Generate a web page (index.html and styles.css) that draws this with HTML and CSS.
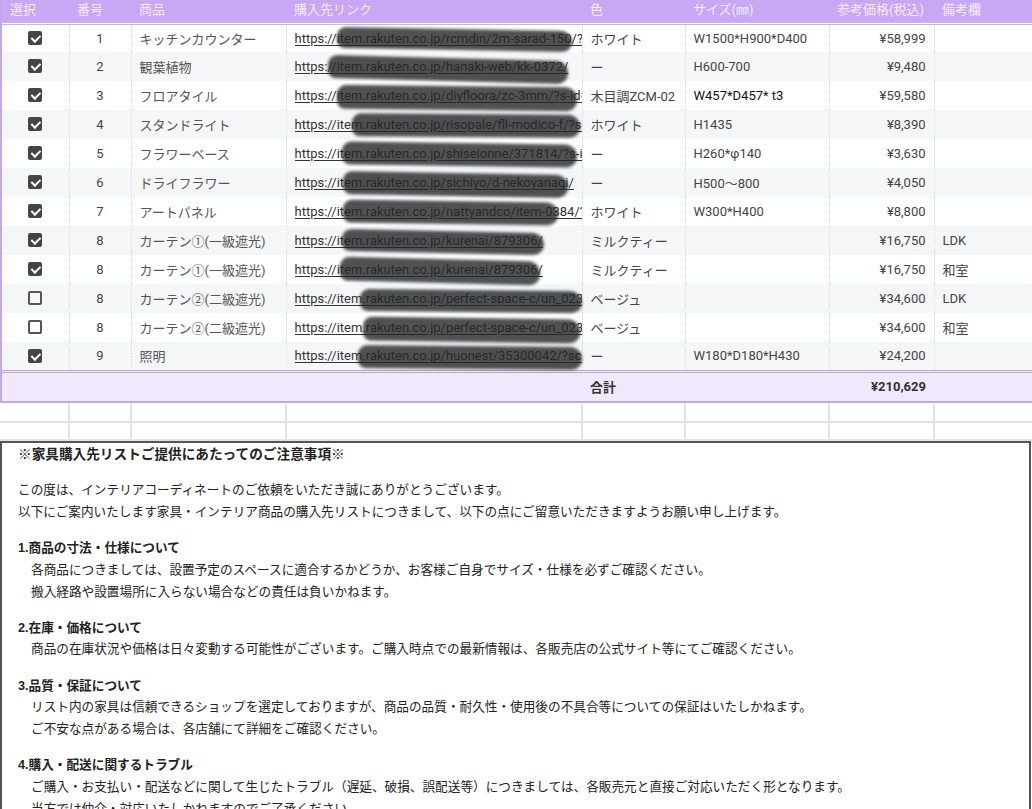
FILE: index.html
```html
<!DOCTYPE html>
<html lang="ja">
<head>
<meta charset="utf-8">
<title>家具購入先リスト</title>
<link rel="stylesheet" href="styles.css">
</head>
<body>
<div class="sheet">
  <div class="data-wrap">
    <table class="grid">
      <colgroup>
        <col class="c-sel"><col class="c-no"><col class="c-item"><col class="c-link"><col class="c-color"><col class="c-size"><col class="c-price"><col class="c-note">
      </colgroup>
      <thead>
        <tr><th>選択</th><th>番号</th><th>商品</th><th>購入先リンク</th><th>色</th><th>サイズ(㎜)</th><th>参考価格(税込)</th><th>備考欄</th></tr>
      </thead>
      <tbody>
        <tr><td class="sel"><span class="cb on"></span></td><td class="no">1</td><td class="item">キッチンカウンター</td><td class="link"><a>https://item.rakuten.co.jp/rcmdin/2m-sarad-150/?s-id=top_normal_browsehist</a></td><td>ホワイト</td><td>W1500*H900*D400</td><td class="price">¥58,999</td><td></td></tr>
        <tr class="alt"><td class="sel"><span class="cb on"></span></td><td class="no">2</td><td class="item">観葉植物</td><td class="link"><a>https://item.rakuten.co.jp/hanaki-web/kk-0372/</a></td><td>ー</td><td>H600-700</td><td class="price">¥9,480</td><td></td></tr>
        <tr><td class="sel"><span class="cb on"></span></td><td class="no">3</td><td class="item">フロアタイル</td><td class="link"><a>https://item.rakuten.co.jp/diyfloora/zc-3mm/?s-id=top_normal</a></td><td>木目調ZCM-02</td><td class="dark">W457*D457* t3</td><td class="price">¥59,580</td><td></td></tr>
        <tr class="alt"><td class="sel"><span class="cb on"></span></td><td class="no">4</td><td class="item">スタンドライト</td><td class="link"><a>https://item.rakuten.co.jp/risopale/fll-modico-f/?scid=af_pc</a></td><td>ホワイト</td><td>H1435</td><td class="price">¥8,390</td><td></td></tr>
        <tr><td class="sel"><span class="cb on"></span></td><td class="no">5</td><td class="item">フラワーベース</td><td class="link"><a>https://item.rakuten.co.jp/shiseionne/371814/?s-id=top</a></td><td>ー</td><td>H260*φ140</td><td class="price">¥3,630</td><td></td></tr>
        <tr class="alt"><td class="sel"><span class="cb on"></span></td><td class="no">6</td><td class="item">ドライフラワー</td><td class="link"><a>https://item.rakuten.co.jp/sichiyo/d-nekoyanagi/</a></td><td>ー</td><td>H500～800</td><td class="price">¥4,050</td><td></td></tr>
        <tr><td class="sel"><span class="cb on"></span></td><td class="no">7</td><td class="item">アートパネル</td><td class="link"><a>https://item.rakuten.co.jp/nattyandco/item-0384/?s-id=top</a></td><td>ホワイト</td><td>W300*H400</td><td class="price">¥8,800</td><td></td></tr>
        <tr class="alt"><td class="sel"><span class="cb on"></span></td><td class="no">8</td><td class="item">カーテン①(一級遮光)</td><td class="link"><a>https://item.rakuten.co.jp/kurenai/879306/</a></td><td>ミルクティー</td><td></td><td class="price">¥16,750</td><td>LDK</td></tr>
        <tr><td class="sel"><span class="cb on"></span></td><td class="no">8</td><td class="item">カーテン①(一級遮光)</td><td class="link"><a>https://item.rakuten.co.jp/kurenai/879306/</a></td><td>ミルクティー</td><td></td><td class="price">¥16,750</td><td>和室</td></tr>
        <tr class="alt"><td class="sel"><span class="cb"></span></td><td class="no">8</td><td class="item">カーテン②(二級遮光)</td><td class="link"><a>https://item.rakuten.co.jp/perfect-space-c/un_02333/</a></td><td>ベージュ</td><td></td><td class="price">¥34,600</td><td>LDK</td></tr>
        <tr><td class="sel"><span class="cb"></span></td><td class="no">8</td><td class="item">カーテン②(二級遮光)</td><td class="link"><a>https://item.rakuten.co.jp/perfect-space-c/un_02333/</a></td><td>ベージュ</td><td></td><td class="price">¥34,600</td><td>和室</td></tr>
        <tr class="alt"><td class="sel"><span class="cb on"></span></td><td class="no">9</td><td class="item">照明</td><td class="link"><a>https://item.rakuten.co.jp/huonest/35300042/?scid=af_pc</a></td><td>ー</td><td>W180*D180*H430</td><td class="price">¥24,200</td><td></td></tr>
      </tbody>
      <tfoot>
        <tr><td></td><td></td><td></td><td></td><td class="sum-label">合計</td><td></td><td class="price sum">¥210,629</td><td></td></tr>
      </tfoot>
    </table>
    <div class="redactions" aria-hidden="true">
      <span class="rd r1"></span><span class="rd r2"></span><span class="rd r3"></span><span class="rd r4"></span>
      <span class="rd r5"></span><span class="rd r6"></span><span class="rd r7"></span><span class="rd r8"></span>
      <span class="rd r9"></span><span class="rd r10"></span><span class="rd r11"></span><span class="rd r12"></span>
    </div>
  </div>

  <table class="blank">
    <colgroup>
      <col class="c-sel"><col class="c-no"><col class="c-item"><col class="c-link"><col class="c-color"><col class="c-size"><col class="c-price"><col class="c-note">
    </colgroup>
    <tr><td></td><td></td><td></td><td></td><td></td><td></td><td></td><td></td></tr>
    <tr><td></td><td></td><td></td><td></td><td></td><td></td><td></td><td></td></tr>
  </table>

  <section class="notes">
    <h1 class="notes-title">※家具購入先リストご提供にあたってのご注意事項※</h1>
    <div class="block">
      <p>この度は、インテリアコーディネートのご依頼をいただき誠にありがとうございます。</p>
      <p>以下にご案内いたします家具・インテリア商品の購入先リストにつきまして、以下の点にご留意いただきますようお願い申し上げます。</p>
    </div>
    <div class="block">
      <h2>1.商品の寸法・仕様について</h2>
      <p class="ind">各商品につきましては、設置予定のスペースに適合するかどうか、お客様ご自身でサイズ・仕様を必ずご確認ください。</p>
      <p class="ind">搬入経路や設置場所に入らない場合などの責任は負いかねます。</p>
    </div>
    <div class="block">
      <h2>2.在庫・価格について</h2>
      <p class="ind">商品の在庫状況や価格は日々変動する可能性がございます。ご購入時点での最新情報は、各販売店の公式サイト等にてご確認ください。</p>
    </div>
    <div class="block">
      <h2>3.品質・保証について</h2>
      <p class="ind">リスト内の家具は信頼できるショップを選定しておりますが、商品の品質・耐久性・使用後の不具合等についての保証はいたしかねます。</p>
      <p class="ind">ご不安な点がある場合は、各店舗にて詳細をご確認ください。</p>
    </div>
    <div class="block">
      <h2>4.購入・配送に関するトラブル</h2>
      <p class="ind">ご購入・お支払い・配送などに関して生じたトラブル（遅延、破損、誤配送等）につきましては、各販売元と直接ご対応いただく形となります。</p>
      <p class="ind">当方では仲介・対応いたしかねますのでご了承ください。</p>
    </div>
  </section>
</div>
</body>
</html>
```

FILE: styles.css
```css
* { box-sizing: border-box; }
html, body { margin: 0; padding: 0; background: #fff; }
body {
  font-family: Roboto, "Noto Sans CJK JP", sans-serif;
  font-size: 13px;
  color: #444;
  overflow: hidden;
  height: 809px;
}
.sheet { width: 1032px; }

.data-wrap { position: relative; border-left: 2px solid #c2a8e8; }

table { border-collapse: collapse; table-layout: fixed; width: 1032px; }
.data-wrap .grid { width: 1030px; }

.c-sel { width: 67px; }
.c-no { width: 62px; }
.c-item { width: 155px; }
.c-link { width: 296px; }
.c-color { width: 103px; }
.c-size { width: 144px; }
.c-price { width: 105px; }
.c-note { width: 98px; }
.blank .c-sel { width: 69px; }

.grid th {
  height: 23px;
  background: #c8a8f4;
  background-clip: padding-box;
  color: #f3ecfd;
  font-weight: 400;
  text-align: left;
  vertical-align: top;
  padding: 0 8px;
  border-bottom: 3px double #c5b8d6;
  white-space: nowrap;
  line-height: 20px;
}
.grid tbody td {
  height: 29px;
  padding: 0 8px;
  white-space: nowrap;
  overflow: hidden;
  border-right: 1px dotted #d6d6dc;
  vertical-align: middle;
}
.grid tbody td:last-child { border-right: none; }
.grid tbody tr.alt td { background: #f4f6f8; }

.sel { text-align: center; padding: 0 !important; }
.no { text-align: center; color: #444; }
.item { color: #555; }
.grid tbody td.link { padding-right: 0; }
.link a { display: block; overflow: hidden; color: #333; text-decoration: underline; text-underline-offset: 2px; }
.price { text-align: right; }
.dark { color: #111; }

.cb {
  display: inline-block;
  width: 14px; height: 14px;
  border: 2px solid #555;
  border-radius: 2px;
  vertical-align: middle;
  position: relative;
  top: -1px;
}
.cb.on {
  background: #454545;
  border-color: #454545;
}
.cb.on::after {
  content: "";
  position: absolute;
  left: 2.5px; top: 0px;
  width: 3.5px; height: 7px;
  border-right: 2px solid #fff;
  border-bottom: 2px solid #fff;
  transform: rotate(45deg);
}

.grid tfoot td {
  height: 31px;
  background: #f1e8fd;
  border-top: 3px double #b9a9cc;
  border-bottom: 2px solid #bfaed3;
  padding: 0 8px;
  font-weight: 700;
  color: #333;
}
.grid tfoot td.price { text-align: right; }

.blank td {
  height: 19px;
  border: 2px solid #e3e3e3;
  border-top: none;
}
.blank tr:last-child td { height: 18px; }
.blank td:first-child { border-left: none; }
.blank td:last-child { border-right: none; }

.redactions { position: absolute; inset: 0; pointer-events: none; }
.rd {
  position: absolute;
  background: rgba(38, 38, 38, 0.8);
  border-radius: 9px 12px 10px 8px;
  filter: blur(1.6px);
}
.r1 { left: 335px; top: 29px; width: 235px; height: 21px; transform: rotate(1deg); }
.r2 { left: 326px; top: 58px; width: 240px; height: 23px; transform: rotate(1.5deg); }
.r3 { left: 335px; top: 86px; width: 240px; height: 24px; transform: rotate(0.6deg); }
.r4 { left: 350px; top: 114px; width: 228px; height: 23px; transform: rotate(0.4deg); }
.r5 { left: 340px; top: 143px; width: 235px; height: 23px; transform: rotate(0.8deg); }
.r6 { left: 341px; top: 173px; width: 225px; height: 23px; transform: rotate(1deg); }
.r7 { left: 341px; top: 201px; width: 215px; height: 23px; transform: rotate(0.8deg); }
.r8 { left: 340px; top: 231px; width: 202px; height: 22px; transform: rotate(1.2deg); }
.r9 { left: 338px; top: 259px; width: 200px; height: 24px; transform: rotate(1.4deg); }
.r10 { left: 358px; top: 290px; width: 222px; height: 22px; transform: rotate(0.6deg); }
.r11 { left: 361px; top: 318px; width: 217px; height: 24px; transform: rotate(0.8deg); }
.r12 { left: 356px; top: 346px; width: 224px; height: 23px; transform: rotate(0.5deg); }

.notes {
  border: 2px solid #555;
  border-bottom: none;
  width: 1031px;
  padding: 1px 16px 20px;
  font-family: "Liberation Sans", "Noto Sans CJK JP", sans-serif;
  font-size: 12.65px;
  color: #222;
  line-height: 21.7px;
}
.notes h1, .notes h2, .notes p { margin: 0; font-size: inherit; }
.notes-title { font-weight: 700; font-size: 13.65px !important; }
.notes h2 { font-weight: 700; }
.notes .block { margin-top: 14.5px; }
.notes .ind { padding-left: 13px; }
```
